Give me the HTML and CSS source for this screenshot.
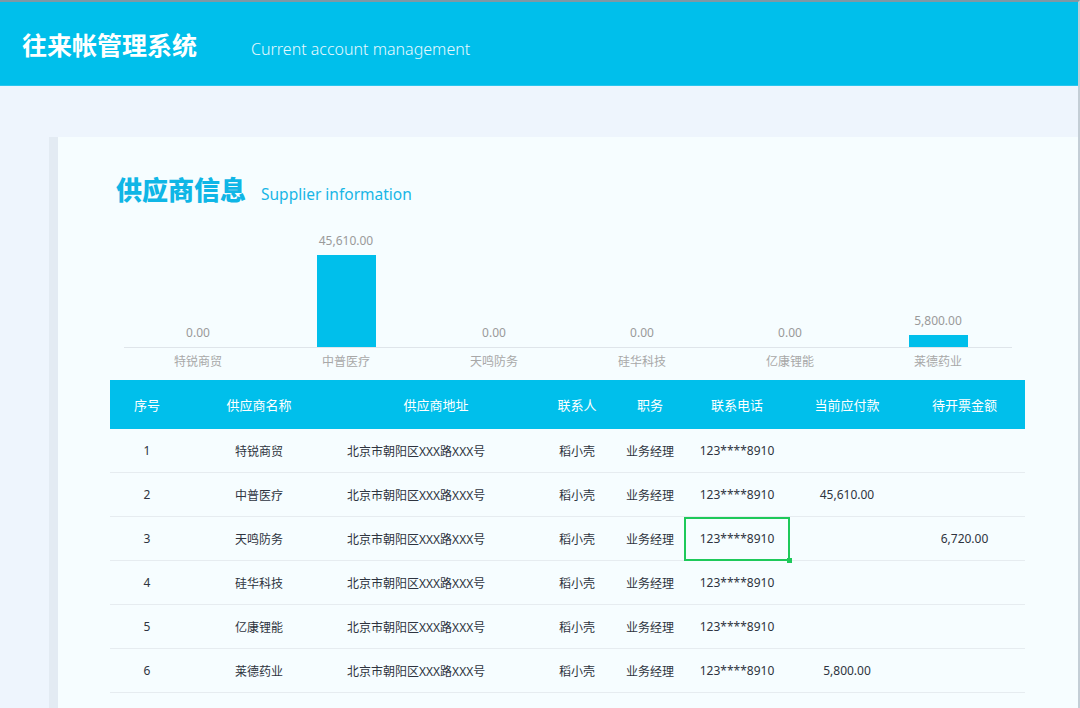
FILE: index.html
```html
<!DOCTYPE html>
<html lang="zh-CN">
<head>
    <meta charset="UTF-8">
    <meta name="viewport" content="width=device-width, initial-scale=1.0">
    <title>往来帐管理系统</title>
    <link rel="stylesheet" href="styles.css">
</head>
<body>
    <div class="page">
        <header class="topbar">
            <h1>往来帐管理系统</h1>
            <span class="topbar-sub">Current account management</span>
        </header>

        <main class="main">
            <section class="card">
                <div class="card-title">
                    <h2>供应商信息</h2>
                    <span class="card-sub">Supplier information</span>
                </div>

                <div class="panel">
                    <div class="chart">
                        <div class="plot">
                            <div class="bar-col"><span class="bar-value">0.00</span><div class="bar" style="height: 0px;"></div></div>
                            <div class="bar-col"><span class="bar-value">45,610.00</span><div class="bar" style="height: 92px;"></div></div>
                            <div class="bar-col"><span class="bar-value">0.00</span><div class="bar" style="height: 0px;"></div></div>
                            <div class="bar-col"><span class="bar-value">0.00</span><div class="bar" style="height: 0px;"></div></div>
                            <div class="bar-col"><span class="bar-value">0.00</span><div class="bar" style="height: 0px;"></div></div>
                            <div class="bar-col"><span class="bar-value">5,800.00</span><div class="bar" style="height: 12px;"></div></div>
                        </div>
                        <div class="axis">
                            <span>特锐商贸</span>
                            <span>中普医疗</span>
                            <span>天鸣防务</span>
                            <span>硅华科技</span>
                            <span>亿康锂能</span>
                            <span>莱德药业</span>
                        </div>
                    </div>

                    <table class="grid">
                        <colgroup>
                            <col style="width: 74px;">
                            <col style="width: 150px;">
                            <col style="width: 204px;">
                            <col style="width: 78px;">
                            <col style="width: 68px;">
                            <col style="width: 106px;">
                            <col style="width: 114px;">
                            <col style="width: 121px;">
                        </colgroup>
                        <thead>
                            <tr>
                                <th>序号</th>
                                <th>供应商名称</th>
                                <th>供应商地址</th>
                                <th>联系人</th>
                                <th>职务</th>
                                <th>联系电话</th>
                                <th>当前应付款</th>
                                <th>待开票金额</th>
                            </tr>
                        </thead>
                        <tbody>
                            <tr>
                                <td>1</td><td>特锐商贸</td><td class="addr">北京市朝阳区XXX路XXX号</td><td>稻小壳</td><td>业务经理</td><td>123****8910</td><td></td><td></td>
                            </tr>
                            <tr>
                                <td>2</td><td>中普医疗</td><td class="addr">北京市朝阳区XXX路XXX号</td><td>稻小壳</td><td>业务经理</td><td>123****8910</td><td>45,610.00</td><td></td>
                            </tr>
                            <tr>
                                <td>3</td><td>天鸣防务</td><td class="addr">北京市朝阳区XXX路XXX号</td><td>稻小壳</td><td>业务经理</td><td class="selected">123****8910</td><td></td><td>6,720.00</td>
                            </tr>
                            <tr>
                                <td>4</td><td>硅华科技</td><td class="addr">北京市朝阳区XXX路XXX号</td><td>稻小壳</td><td>业务经理</td><td>123****8910</td><td></td><td></td>
                            </tr>
                            <tr>
                                <td>5</td><td>亿康锂能</td><td class="addr">北京市朝阳区XXX路XXX号</td><td>稻小壳</td><td>业务经理</td><td>123****8910</td><td></td><td></td>
                            </tr>
                            <tr>
                                <td>6</td><td>莱德药业</td><td class="addr">北京市朝阳区XXX路XXX号</td><td>稻小壳</td><td>业务经理</td><td>123****8910</td><td>5,800.00</td><td></td>
                            </tr>
                        </tbody>
                    </table>
                </div>
            </section>
        </main>
    </div>
</body>
</html>
```

FILE: styles.css
```css
html, body {
    margin: 0;
    height: 100%;
}
body {
    font-family: "Noto Sans", "Noto Sans CJK SC", sans-serif;
    background-color: #eef5fd;
    overflow: hidden;
}
.page {
    height: 100%;
    box-sizing: border-box;
    border-top: 2px solid #7f98a4;
    border-right: 2px solid #c4ced6;
    display: flex;
    flex-direction: column;
}
.topbar {
    height: 84px;
    flex-shrink: 0;
    background-color: #00bfeb;
    display: flex;
    align-items: baseline;
    padding: 26px 0 0 22px;
    box-sizing: border-box;
    border-bottom: 1px solid #29c6ee;
}
.topbar h1 {
    margin: 0;
    font-family: "Noto Sans CJK SC", sans-serif;
    font-size: 25px;
    font-weight: bold;
    color: #ffffff;
    line-height: 32px;
}
.topbar-sub {
    margin-left: 54px;
    font-size: 16px;
    font-weight: 300;
    color: #e6f9ff;
}
.main {
    flex: 1;
    padding: 51px 0 0 49px;
    display: flex;
}
.card {
    flex: 1;
    background-color: #f6fdff;
    border-left: 9px solid #e3ebf3;
}
.card-title {
    display: flex;
    align-items: baseline;
    padding: 34px 0 0 58px;
}
.card-title h2 {
    margin: 0;
    font-family: "Noto Sans CJK SC", sans-serif;
    font-size: 26px;
    font-weight: 900;
    color: #0fb6e6;
    line-height: 36px;
}
.card-sub {
    margin-left: 15px;
    font-size: 15.5px;
    color: #18b6e6;
}
.panel {
    width: 915px;
    margin: 25px 0 0 52px;
}
.chart {
    padding: 0 13px 0 14px;
}
.plot {
    height: 115px;
    display: flex;
    align-items: flex-end;
    border-bottom: 1px solid #dfe5ea;
}
.bar-col {
    flex: 1;
    display: flex;
    flex-direction: column;
    align-items: center;
    justify-content: flex-end;
}
.bar-value {
    font-size: 12px;
    line-height: 14px;
    color: #9a9a9a;
    margin-bottom: 7px;
}
.bar {
    width: 59px;
    background-color: #00bfeb;
}
.axis {
    display: flex;
    padding-top: 7px;
}
.axis span {
    flex: 1;
    text-align: center;
    font-size: 12px;
    line-height: 14px;
    color: #a8a8a8;
}
.grid {
    width: 915px;
    margin-top: 11px;
    border-collapse: collapse;
    table-layout: fixed;
}
.grid th {
    height: 49px;
    padding: 0;
    background-color: #00bfeb;
    color: #ffffff;
    font-size: 13px;
    font-weight: normal;
    text-align: center;
}
.grid td {
    height: 43px;
    padding: 0;
    font-size: 12px;
    color: #2e3440;
    text-align: center;
    border-bottom: 1px solid #e6ecf0;
}
.grid td.addr {
    text-align: left;
    padding-left: 13px;
}
.grid td.selected {
    position: relative;
    outline: 2px solid #1ec95a;
    outline-offset: -2px;
}
.grid td.selected::after {
    content: "";
    position: absolute;
    right: -2px;
    bottom: -3px;
    width: 5px;
    height: 5px;
    background-color: #1ec95a;
}
```
